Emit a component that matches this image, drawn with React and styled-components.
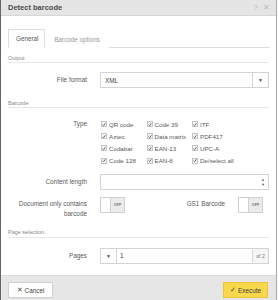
import React from "react";
import styled, { createGlobalStyle } from "styled-components";

const Global = createGlobalStyle`
  html, body { margin: 0; padding: 0; background: #fff; }
  body { font-family: "Liberation Sans", Arial, sans-serif; }
  * { box-sizing: border-box; }
`;

const Dialog = styled.div`
  width: 277px;
  height: 300px;
  display: flex;
  flex-direction: column;
  border-left: 1px solid #666;
  border-right: 1px solid #aaa;
  background: #fff;
  overflow: hidden;
`;

const Header = styled.div`
  height: 16px;
  flex: none;
  display: flex;
  align-items: center;
  padding: 0 6px 0 7px;
  background: #e5e5e5;
  border-bottom: 1px solid #d6d6d6;
`;

const Title = styled.div`
  flex: 1;
  font-size: 7.5px;
  font-weight: bold;
  color: #4a4a4a;
`;

const HeaderIcon = styled.span`
  font-size: 7.5px;
  color: #bbb;
  margin-left: 5px;
`;

const Body = styled.div`
  flex: 1;
  display: flex;
  flex-direction: column;
  padding: 13px 7px 0 7px;
`;

const Tabs = styled.div`
  display: flex;
  height: 19px;
  border-bottom: 1px solid #ddd;
`;

const Tab = styled.div`
  height: 19px;
  display: flex;
  align-items: center;
  padding: 0 ${(p) => (p.$active ? "6px" : "8px")} 0 ${(p) => (p.$active ? "7px" : "8px")};
  font-size: 6.3px;
  color: ${(p) => (p.$active ? "#555" : "#999")};
  background: #fff;
  border: ${(p) => (p.$active ? "1px solid #ddd" : "1px solid transparent")};
  border-bottom: ${(p) => (p.$active ? "1px solid #fff" : "none")};
`;

const Section = styled.div`
  margin-top: ${(p) => p.$mt}px;
  height: 10px;
  font-size: 5.5px;
  color: #888;
  border-bottom: 1px solid #e6e6e6;
  display: flex;
  align-items: center;
`;

const Row = styled.div`
  margin-top: ${(p) => p.$mt}px;
  display: grid;
  grid-template-columns: 79px 1fr;
  column-gap: 13px;
  align-items: ${(p) => p.$align || "center"};
`;

const Label = styled.div`
  text-align: right;
  font-size: 6.4px;
  color: #5a5a5a;
  line-height: 10px;
  padding-top: ${(p) => p.$pt || 0}px;
`;

const Field = styled.div`
  height: 16px;
  display: flex;
  align-items: stretch;
  border: 1px solid #d4d4d4;
  background: #fff;
  font-size: 6.4px;
  color: #444;
`;

const FieldText = styled.div`
  flex: 1;
  display: flex;
  align-items: center;
  padding-left: ${(p) => p.$pl || 4}px;
`;

const Addon = styled.div`
  width: ${(p) => p.$w}px;
  display: flex;
  align-items: center;
  justify-content: center;
  border-${(p) => p.$side}: 1px solid #d4d4d4;
  background: ${(p) => p.$bg || "#fff"};
  font-size: ${(p) => p.$fs || 6}px;
  color: ${(p) => p.$color || "#777"};
`;

const Spinner = styled.div`
  width: 10px;
  display: flex;
  flex-direction: column;
  align-items: center;
  justify-content: center;
  font-size: 4px;
  line-height: 5px;
  color: #666;
`;

const CheckGrid = styled.div`
  display: grid;
  grid-template-columns: repeat(3, 45.5px);
  grid-auto-rows: 12.2px;
  padding-left: 1px;
`;

const CheckItem = styled.div`
  display: flex;
  align-items: center;
  gap: 2px;
  font-size: 6.2px;
  color: #5a5a5a;
  white-space: nowrap;
`;

const Box = styled.span`
  width: 6px;
  height: 6px;
  flex: none;
  border: 1px solid #c4c4c4;
  background: #f4f4f4;
  display: flex;
  align-items: center;
  justify-content: center;
`;

const ToggleRow = styled.div`
  margin-top: 7px;
  display: grid;
  grid-template-columns: 79px 25px 1fr 25px;
  column-gap: 13px;
  padding-right: 6px;
  align-items: start;
`;

const Toggle = styled.div`
  width: 25px;
  height: 16px;
  display: flex;
  border: 1px solid #d0d0d0;
  background: #ebebeb;
`;

const Knob = styled.div`
  width: 10px;
  background: #fff;
  border-right: 1px solid #d0d0d0;
`;

const ToggleText = styled.div`
  flex: 1;
  display: flex;
  align-items: center;
  justify-content: center;
  font-size: 3.8px;
  font-weight: bold;
  color: #777;
`;

const Footer = styled.div`
  height: 25px;
  flex: none;
  display: flex;
  justify-content: space-between;
  align-items: flex-start;
  padding: 6px 8px 0 7px;
  background: #e6e6e6;
  border-top: 1px solid #dcdcdc;
`;

const Button = styled.div`
  width: 45px;
  height: 16px;
  display: flex;
  align-items: center;
  justify-content: center;
  gap: 2px;
  font-size: 6.4px;
  color: #444;
  background: ${(p) => (p.$primary ? "#f9d84c" : "#fff")};
  border: 1px solid ${(p) => (p.$primary ? "#e9c43a" : "#d0d0d0")};
`;

const Glyph = styled.span`
  font-size: 7px;
`;

const Check = () => (
  <svg width="5" height="5" viewBox="0 0 10 10">
    <path d="M1.5 5.5 L4 8 L8.5 2" fill="none" stroke="#444" strokeWidth="2" />
  </svg>
);

const items = [
  "QR code", "Code 39", "ITF",
  "Aztec", "Data matrix", "PDF417",
  "Codabar", "EAN-13", "UPC-A",
  "Code 128", "EAN-8", "De/select all",
];

export default function App() {
  return (
    <>
      <Global />
      <Dialog>
        <Header>
          <Title>Detect barcode</Title>
          <HeaderIcon>?</HeaderIcon>
          <HeaderIcon>✕</HeaderIcon>
        </Header>
        <Body>
          <Tabs>
            <Tab $active>General</Tab>
            <Tab>Barcode options</Tab>
          </Tabs>

          <Section $mt={5}>Output</Section>
          <Row $mt={9}>
            <Label>File format</Label>
            <Field>
              <FieldText>XML</FieldText>
              <Addon $w={16} $side="left" $fs={5} $color="#444">▼</Addon>
            </Field>
          </Row>

          <Section $mt={10}>Barcode</Section>
          <Row $mt={10} $align="start">
            <Label $pt={1}>Type</Label>
            <CheckGrid>
              {items.map((t) => (
                <CheckItem key={t}>
                  <Box><Check /></Box>
                  {t}
                </CheckItem>
              ))}
            </CheckGrid>
          </Row>

          <Row $mt={7}>
            <Label>Content length</Label>
            <Field>
              <FieldText />
              <Spinner><span>▲</span><span>▼</span></Spinner>
            </Field>
          </Row>

          <ToggleRow>
            <Label $pt={2}>Document only contains barcode</Label>
            <Toggle><Knob /><ToggleText>OFF</ToggleText></Toggle>
            <Label $pt={2}>GS1 Barcode</Label>
            <Toggle><Knob /><ToggleText>OFF</ToggleText></Toggle>
          </ToggleRow>

          <Section $mt={9}>Page selection</Section>
          <Row $mt={10}>
            <Label>Pages</Label>
            <Field>
              <Addon $w={16} $side="right" $fs={5} $color="#444">▼</Addon>
              <FieldText $pl={3}>1</FieldText>
              <Addon $w={16} $side="left" $bg="#f5f5f5" $fs={5}>of 2</Addon>
            </Field>
          </Row>
        </Body>
        <Footer>
          <Button><Glyph>✕</Glyph>Cancel</Button>
          <Button $primary><Glyph>✓</Glyph>Execute</Button>
        </Footer>
      </Dialog>
    </>
  );
}
